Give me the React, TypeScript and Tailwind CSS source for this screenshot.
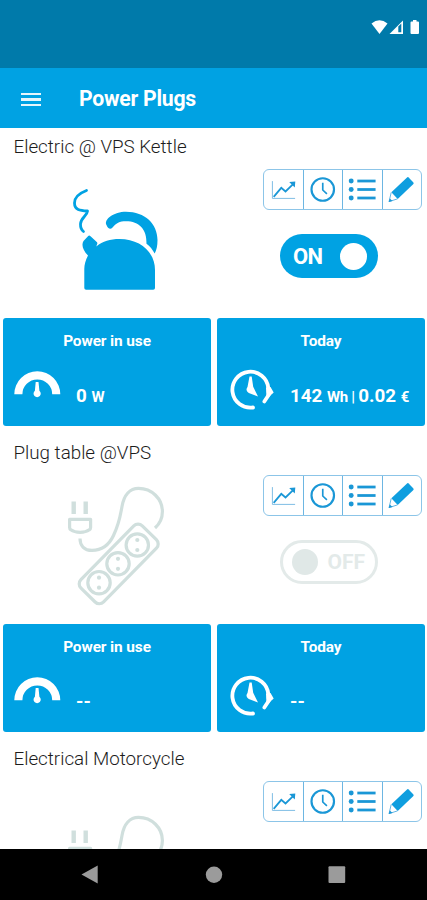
import React from 'react';

type DeviceKind = 'kettle' | 'strip';

interface Plug {
  id: number;
  name: string;
  kind: DeviceKind;
  on: boolean;
  power: string | null;
  energy: string | null;
  cost: string | null;
  // last row of the list, only its upper part is on screen
  collapsed?: boolean;
}

const plugs: Plug[] = [
  { id: 1, name: 'Electric @ VPS Kettle', kind: 'kettle', on: true, power: '0', energy: '142', cost: '0.02' },
  { id: 2, name: 'Plug table @VPS', kind: 'strip', on: false, power: null, energy: null, cost: null },
  { id: 3, name: 'Electrical Motorcycle', kind: 'strip', on: false, power: null, energy: null, cost: null, collapsed: true },
];

const KettleArt = () => (
  <svg width="110" height="124" viewBox="60 179 110 124" fill="#00a2e3">
    <path
      d="M86.500 190.500C80 193 74.500 197.500 74.500 203C74.500 210 80 210.500 87.500 211C87 216 81 217.500 80.500 224C80.400 227.500 81.500 230 83.500 231.500"
      fill="none"
      stroke="#00a2e3"
      strokeWidth="2.800"
      strokeLinecap="round"
      strokeLinejoin="round"
    />
    <path d="M84.300 288V269C84.300 265 85.500 260 88 255.500C82.500 250 81.300 244.500 83.500 241L88 236.200Q89.200 235 90.500 236.200L96.500 241.800Q98 243 97 244.500L96.300 246.500C103 241 110 239 119.500 239C140 239 155 252 155 270V288Q155 289.800 153.200 289.800H86.100Q84.300 289.800 84.300 288Z" />
    <path d="M106.500 225C103.500 219.500 114 211.800 126 211.800C145 211.800 157.500 224 157.500 240C157.500 246 156.500 250 154.700 253.500C152.500 249.500 150 246.500 146.500 243.800C147 229 139 221.200 126 221.200C119.500 221.200 116 223 112.300 227.800C110.500 230 107.500 228.500 106.500 225Z" />
  </svg>
);

const StripArt = () => (
  <svg width="110" height="124" viewBox="60 485 110 124" fill="none" stroke="#d0dfdd" strokeWidth="3.200">
    <path d="M73.700 501.500V514M85.700 501.500V514" strokeWidth="4.400" />
    <path d="M69.600 519.300H90.600V527.500Q90.600 529 89.300 529.800Q86 532.300 80.100 532.300Q74.200 532.300 70.900 529.800Q69.600 529 69.600 527.500Z" strokeLinejoin="round" />
    <path d="M80 538.500C80 546 84.500 550.400 92 550.400C102 550.400 109 545 113.500 535.500C119.500 523 120 517 122 506.500C124 495 130 488.400 138.500 488.400C152 488.400 162.400 499 162.400 511.500C162.400 518 159.500 524 155 528" />
    <rect x="75" y="548" width="87.400" height="31.800" rx="6" transform="rotate(-45.500 118.700 563.900)" />
    {[[137.3, 545], [118, 563.8], [99, 582.7]].map(([cx, cy]) => (
      <g key={cx}>
        <circle cx={cx} cy={cy} r="11.200" />
        <circle cx={cx} cy={cy - 5} r="2.100" fill="#d0dfdd" stroke="none" />
        <circle cx={cx} cy={cy + 5} r="2.100" fill="#d0dfdd" stroke="none" />
      </g>
    ))}
  </svg>
);

const ChartIcon = () => (
  <svg width="39" height="40" viewBox="0 0 39 40" fill="none" stroke="#1a97d6">
    <path d="M8.500 11V28.500H31.500" strokeWidth="1" stroke="#7cbce4" />
    <path d="M9.800 27L17.500 17.800L21.800 21.500L29.500 14" strokeWidth="1.800" />
    <path d="M25.500 12L31.700 11.500L31.200 17.500Z" fill="#1a97d6" stroke="none" />
  </svg>
);

const ClockIcon = () => (
  <svg width="39" height="40" viewBox="0 0 39 40" fill="none" stroke="#1a97d6">
    <circle cx="19" cy="19.500" r="11.400" strokeWidth="2.200" />
    <path d="M19 12.700V20L23.200 24" strokeWidth="1.700" />
  </svg>
);

const ListIcon = () => (
  <svg width="39" height="40" viewBox="0 0 39 40" fill="#1a97d6">
    {[10.9, 19.5, 28.1].map((y) => (
      <g key={y}>
        <circle cx="8.300" cy={y} r="2.500" />
        <rect x="14.500" y={y - 1.4} width="18.500" height="2.800" />
      </g>
    ))}
  </svg>
);

const PencilIcon = () => (
  <svg width="39" height="40" viewBox="0 0 39 40">
    <path d="M24.600 7.200Q25.300 6.600 26 7.300L30.800 12.400Q31.400 13.100 30.800 13.900L14.900 29L8.500 22.300Z" fill="#0f9edf" />
    <path d="M8.300 22.500L6.200 31.700L14.700 29" fill="none" stroke="#5fb4e4" strokeWidth="1" />
    <path d="M5.700 32.200L6.900 28.700L9.700 31.200Z" fill="#1a97d6" />
  </svg>
);

const GaugeIcon = () => (
  <svg width="48" height="44" viewBox="13 368 48 44" fill="#fff">
    <path d="M14.300 394.300A23 23 0 0 1 60.300 394.300H52.200A14.900 14.900 0 0 0 22.400 394.300Z" />
    <path d="M35.700 382H38.500L39.400 390.800A3.600 3.600 0 1 1 34.900 390.800Z" />
  </svg>
);

const TimerIcon = () => (
  <svg width="48" height="44" viewBox="227 368 48 44" fill="none" stroke="#fff" strokeLinecap="round">
    <path d="M253 407.500A18 18 0 1 1 268.300 388" strokeWidth="3.800" />
    <path d="M269 394.500L264.300 401.500" strokeWidth="3.800" />
    <path d="M266 387.500L270.500 387L273.700 392.500L266.500 399Z" fill="#fff" stroke="none" />
    <path d="M249.500 376.500H251.700L253.200 386.800L258 396.500L248.800 393A3.800 3.800 0 0 1 247.500 387Z" fill="#fff" stroke="none" />
  </svg>
);

const actions = [
  { label: 'Statistics', Icon: ChartIcon },
  { label: 'Schedule', Icon: ClockIcon },
  { label: 'Events', Icon: ListIcon },
  { label: 'Edit', Icon: PencilIcon },
];

const ActionBar = () => (
  <div className="flex h-[41px] w-[159px] divide-x divide-[#6db6e2] overflow-hidden rounded-md border border-[#8cc5e8]">
    {actions.map(({ label, Icon }) => (
      <button key={label} aria-label={label} className="flex flex-1 items-center justify-center overflow-hidden">
        <Icon />
      </button>
    ))}
  </div>
);

const PowerSwitch: React.FC<{ on: boolean }> = ({ on }) =>
  on ? (
    <button className="flex h-11 w-[98px] items-center justify-between rounded-full bg-[#00a2e3] pr-[11px] pl-[13px]">
      <span className="pt-px text-[22px] font-bold tracking-[-0.7px] text-white">ON</span>
      <span className="size-[27px] rounded-full bg-white" />
    </button>
  ) : (
    <button className="flex h-11 w-[98px] items-center justify-between rounded-full border-[3.5px] border-[#e3eae9] pr-[10px] pl-[9px]">
      <span className="size-[26px] rounded-full bg-[#e0e8e7]" />
      <span className="pt-px text-[21px] font-bold text-[#e3eae9]">OFF</span>
    </button>
  );

interface StatCardProps {
  title: string;
  icon: React.ReactNode;
  children: React.ReactNode;
}

const StatCard: React.FC<StatCardProps> = ({ title, icon, children }) => (
  <div className="h-[108px] w-[208px] rounded-[3px] bg-[#00a2e3] pt-[13px] text-white">
    <p className="text-center text-[15.4px] leading-5 font-bold tracking-[-0.1px]">{title}</p>
    <div className="mt-[17px] flex items-center pl-[10px]">
      {icon}
      <p className="ml-[15px] pt-[12px] text-[18.8px] leading-6 font-bold whitespace-nowrap">{children}</p>
    </div>
  </div>
);

const PlugSection: React.FC<{ plug: Plug }> = ({ plug }) => (
  <section className={plug.collapsed ? 'min-h-0 flex-1 overflow-hidden' : 'h-[306px] shrink-0'}>
    <h2 className="h-[41px] pt-[7px] pl-[13.5px] text-[18.8px] leading-6 font-light text-[#1c1c1c]">{plug.name}</h2>
    <div className="flex h-[149px] justify-between pr-[5px] pl-[60px]">
      <div className={plug.collapsed ? 'pt-[33px]' : 'pt-[10px]'}>
        {plug.kind === 'kettle' ? <KettleArt /> : <StripArt />}
      </div>
      <div className="flex w-[159px] flex-col">
        <ActionBar />
        {!plug.collapsed && (
          <div className="mt-[24px] ml-[17px]">
            <PowerSwitch on={plug.on} />
          </div>
        )}
      </div>
    </div>
    {!plug.collapsed && (
      <div className="flex gap-[6px] pl-[3px]">
        <StatCard title="Power in use" icon={<GaugeIcon />}>
          {plug.power ? (
            <>
              {plug.power} <span className="text-[15px]">W</span>
            </>
          ) : (
            '--'
          )}
        </StatCard>
        <StatCard title="Today" icon={<TimerIcon />}>
          {plug.energy ? (
            <>
              {plug.energy} <span className="text-[15px] tracking-[-0.3px]">Wh | </span>
              {plug.cost} <span className="text-[15px]">€</span>
            </>
          ) : (
            '--'
          )}
        </StatCard>
      </div>
    )}
  </section>
);

const StatusBar = () => (
  <div className="flex h-[67.5px] shrink-0 justify-end bg-[#007aaa] pt-5 pr-[6px]">
    <svg width="50" height="15" viewBox="371 20 50 15" fill="#fff">
      <path d="M371.500 23.500Q379.500 17 387.500 23.500L379.500 34Z" />
      <path d="M403 20.500V34H389.500Z" />
      <path d="M398.300 26.500L401.300 23.500V32.300H398.300Z" fill="#007aaa" />
      <path d="M411.500 21.500H413V20H416.500V21.500H418Q419 21.500 419 22.500V33Q419 34 418 34H411.500Q410.500 34 410.500 33V22.500Q410.500 21.500 411.500 21.500Z" />
    </svg>
  </div>
);

const AppBar = () => (
  <header className="flex h-[60.5px] shrink-0 items-center bg-[#00a2e3] pt-[3px] pl-[21px] text-white">
    <button aria-label="Menu" className="flex w-5 flex-col gap-[3px]">
      <span className="h-[2.5px] bg-white/90" />
      <span className="h-[2.5px] bg-white/90" />
      <span className="h-[2.5px] bg-white/90" />
    </button>
    <h1 className="ml-[38px] text-[21.2px] font-bold tracking-[-0.25px]">Power Plugs</h1>
  </header>
);

const NavBar = () => (
  <nav className="flex h-[51px] shrink-0 bg-black">
    <svg width="427" height="51" viewBox="0 849 427 51" fill="#9b9b9b">
      <path d="M81.500 874.500L97.700 865.500V883.500Z" />
      <circle cx="214" cy="874.700" r="8.200" />
      <rect x="328.500" y="866.300" width="16.700" height="16.700" rx="1" />
    </svg>
  </nav>
);

export default function App() {
  return (
    <div className="flex h-[900px] w-[427px] flex-col overflow-hidden bg-white font-[Roboto,sans-serif]">
      <StatusBar />
      <AppBar />
      <main className="flex min-h-0 flex-1 flex-col overflow-hidden">
        {plugs.map((plug) => (
          <PlugSection key={plug.id} plug={plug} />
        ))}
      </main>
      <NavBar />
    </div>
  );
}
